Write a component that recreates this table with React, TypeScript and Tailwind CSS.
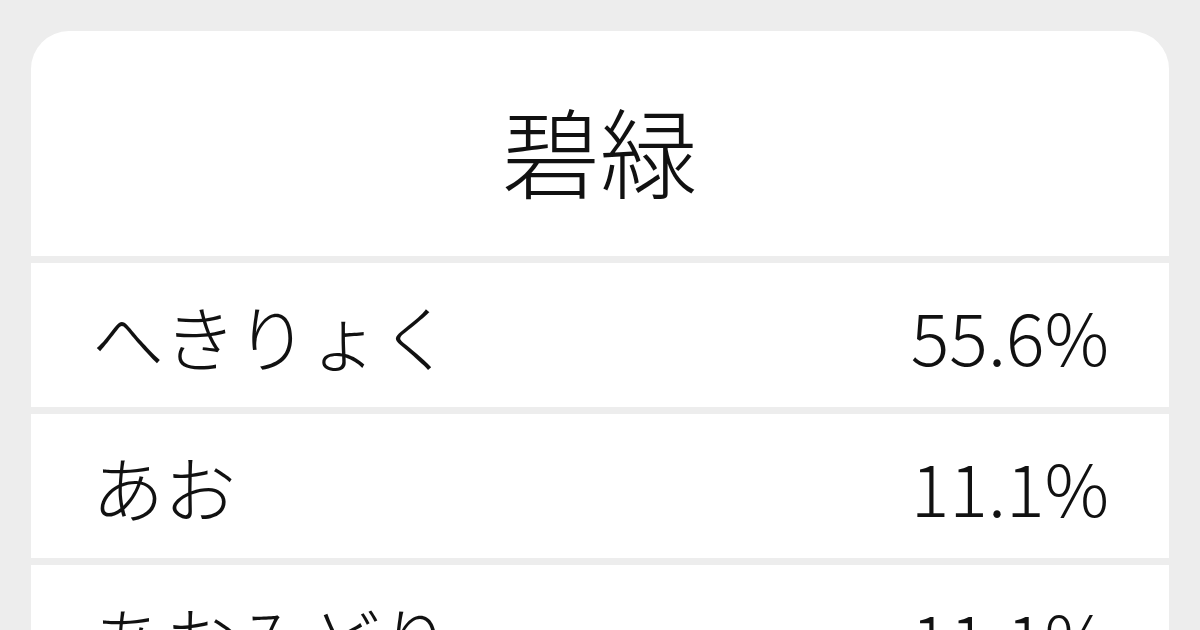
export default function App() {
  const rows = [
    { k: "へきりょく", v: "55.6%" },
    { k: "あお", v: "11.1%" },
    { k: "あおみどり", v: "11.1%" },
  ];
  return (
    <div
      className="w-[1200px] h-[630px] overflow-hidden bg-[#ededed] pt-[31px] px-[31px]"
      style={{ fontFamily: '"Noto Sans CJK JP", "Noto Sans", sans-serif' }}
    >
      <div className="flex flex-col gap-[7px] w-[1138px]">
        <div className="h-[225px] bg-white rounded-t-[38px] flex items-center justify-center">
          <span className="text-[98px] leading-none font-light text-[#111] pt-[8px]">碧緑</span>
        </div>
        {rows.map((r) => (
          <div
            key={r.k}
            className="h-[144px] shrink-0 bg-white flex items-center justify-between pl-[61px] pr-[60px] text-[#111]"
          >
            <span className="text-[72px] leading-none font-light">{r.k}</span>
            <span className="text-[72px] leading-none font-light">{r.v}</span>
          </div>
        ))}
      </div>
    </div>
  );
}
